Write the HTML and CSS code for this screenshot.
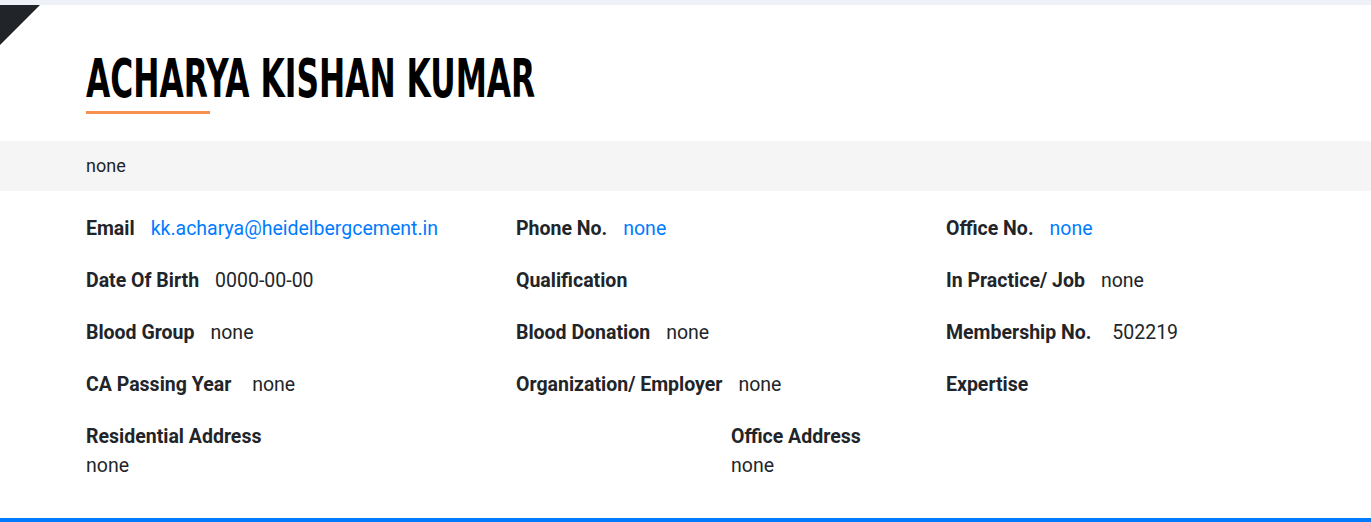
FILE: index.html
```html
<!DOCTYPE html>
<html lang="en">
<head>
<meta charset="utf-8">
<title>Acharya Kishan Kumar</title>
<link rel="stylesheet" href="styles.css">
</head>
<body>
<div class="topstrip"></div>
<section class="profile">
  <div class="corner"></div>
  <header class="head">
    <h1 class="name">ACHARYA KISHAN KUMAR</h1>
  </header>
  <div class="band">none</div>
  <div class="details">
    <div class="grid3">
      <div class="item"><strong class="lbl">Email</strong><a class="val link" href="#">kk.acharya@heidelbergcement.in</a></div>
      <div class="item"><strong class="lbl">Phone No.</strong><a class="val link" href="#">none</a></div>
      <div class="item"><strong class="lbl">Office No.</strong><a class="val link" href="#">none</a></div>

      <div class="item"><strong class="lbl">Date Of Birth</strong><span class="val">0000-00-00</span></div>
      <div class="item"><strong class="lbl">Qualification</strong></div>
      <div class="item"><strong class="lbl">In Practice/ Job</strong><span class="val">none</span></div>

      <div class="item"><strong class="lbl">Blood Group</strong><span class="val">none</span></div>
      <div class="item"><strong class="lbl">Blood Donation</strong><span class="val">none</span></div>
      <div class="item"><strong class="lbl">Membership No.&nbsp;</strong><span class="val">502219</span></div>

      <div class="item"><strong class="lbl">CA Passing Year&nbsp;</strong><span class="val">none</span></div>
      <div class="item"><strong class="lbl">Organization/ Employer</strong><span class="val">none</span></div>
      <div class="item"><strong class="lbl">Expertise</strong></div>
    </div>
    <div class="grid2">
      <div class="addr"><strong class="lbl">Residential Address</strong><div class="addr-val">none</div></div>
      <div class="addr"><strong class="lbl">Office Address</strong><div class="addr-val">none</div></div>
    </div>
  </div>
</section>
</body>
</html>
```
FILE: styles.css
```css
html, body {
  margin: 0;
  padding: 0;
}
body {
  background: #ffffff;
  font-family: Roboto, "Liberation Sans", sans-serif;
  color: #212529;
  height: 522px;
  overflow: hidden;
  display: flex;
  flex-direction: column;
}
.topstrip {
  height: 5px;
  background: #eef2f8;
}
.profile {
  position: relative;
  flex: 1;
  display: flex;
  flex-direction: column;
  border-bottom: 4px solid #007bff;
}
.corner {
  position: absolute;
  left: 0;
  top: 0;
  width: 0;
  height: 0;
  border-top: 40px solid #212529;
  border-right: 40px solid transparent;
}
.head {
  padding: 47px 0 27px 86px;
}
.name {
  margin: 0;
  font-family: "Liberation Sans Narrow", "DejaVu Sans Condensed", sans-serif;
  font-stretch: condensed;
  font-weight: 700;
  font-size: 54px;
  line-height: 54px;
  color: #000000;
  transform: scaleX(0.645);
  transform-origin: left center;
  white-space: nowrap;
}
.head::after {
  content: "";
  display: block;
  width: 124px;
  height: 3px;
  margin-top: 5px;
  background: #f79150;
}
.band {
  background: #f5f5f5;
  height: 50px;
  box-sizing: border-box;
  padding: 13px 0 0 86px;
  font-size: 18px;
  line-height: 24px;
}
.details {
  padding: 23px 0 0 86px;
  font-size: 19.5px;
  line-height: 30px;
}
.grid3 {
  display: grid;
  grid-template-columns: 430px 430px 1fr;
  row-gap: 22px;
}
.grid2 {
  display: grid;
  grid-template-columns: 645px 1fr;
  margin-top: 22px;
}
.addr-val {
  line-height: 28px;
}
.lbl {
  font-weight: 700;
}
.val {
  margin-left: 16px;
}
.link {
  color: #007bff;
  text-decoration: none;
}
```
